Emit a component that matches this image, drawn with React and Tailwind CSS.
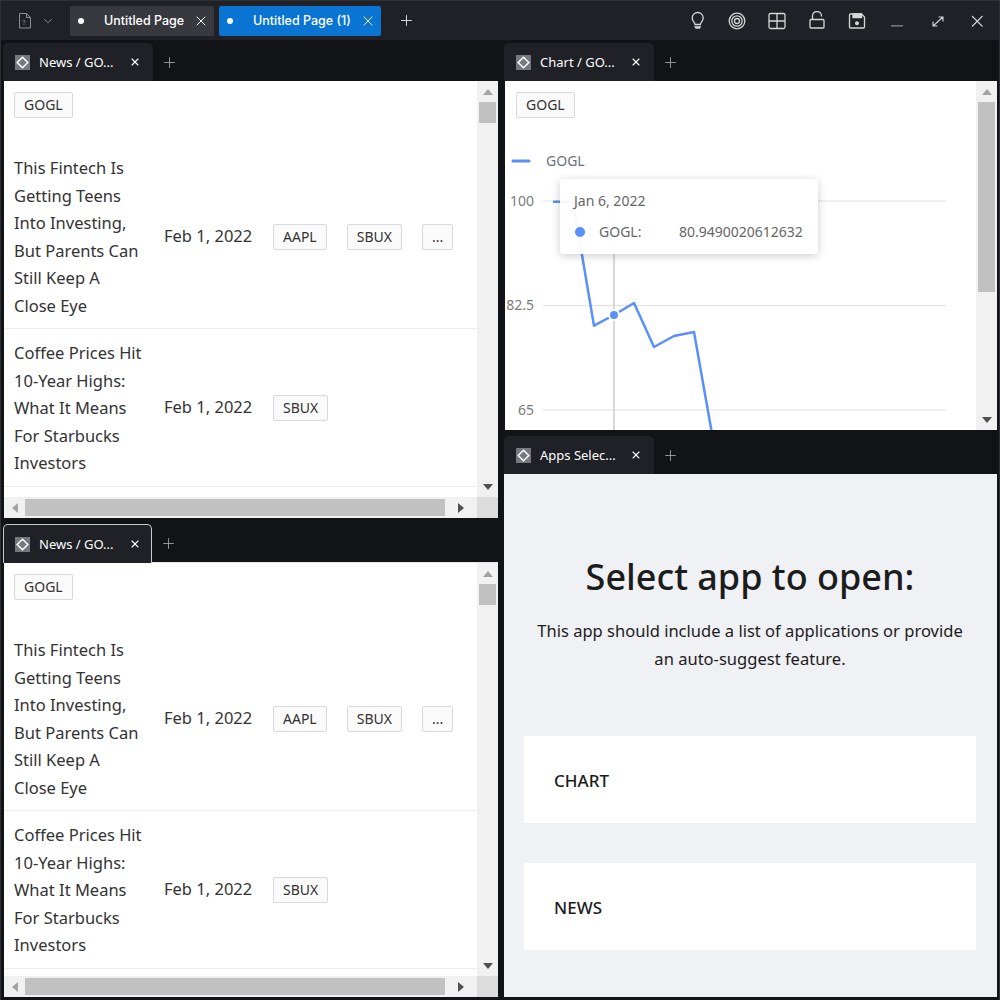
import React from 'react';
import { X, Plus, ChevronDown } from 'lucide-react';

const newsRows = [
  {
    title: 'This Fintech Is Getting Teens Into Investing, But Parents Can Still Keep A Close Eye',
    date: 'Feb 1, 2022',
    tags: ['AAPL', 'SBUX', '...'],
  },
  {
    title: 'Coffee Prices Hit 10-Year Highs: What It Means For Starbucks Investors',
    date: 'Feb 1, 2022',
    tags: ['SBUX'],
  },
];

function Tag({ children }) {
  return (
    <span className="inline-flex h-[26px] shrink-0 items-center rounded-[2px] border border-[#d9d9d9] bg-[#fafafa] px-[9px] text-[14px] leading-none text-[#333]">
      {children}
    </span>
  );
}

function Arrow({ dir, color }) {
  const points = {
    up: '0,6 10,6 5,0',
    down: '0,0 10,0 5,6',
    left: '6,0 6,10 0,5',
    right: '0,0 0,10 6,5',
  }[dir];
  const size = dir === 'up' || dir === 'down' ? 'w-[10px] h-[6px]' : 'w-[6px] h-[10px]';
  const box = dir === 'up' || dir === 'down' ? '0 0 10 6' : '0 0 6 10';
  return (
    <svg viewBox={box} className={size} fill={color}>
      <polygon points={points} />
    </svg>
  );
}

function VScroll({ thumb }) {
  return (
    <div className="flex w-[21px] shrink-0 flex-col items-center bg-[#f1f1f1]">
      <div className="flex h-[21px] items-center justify-center">
        <Arrow dir="up" color="#a3a3a3" />
      </div>
      <div className="w-[17px] bg-[#c1c1c1]" style={{ height: thumb }} />
      <div className="flex-1" />
      <div className="flex h-[21px] items-center justify-center">
        <Arrow dir="down" color="#505050" />
      </div>
    </div>
  );
}

function HScroll() {
  return (
    <div className="flex h-[21px] shrink-0">
      <div className="flex flex-1 items-center bg-[#f1f1f1]">
        <div className="flex w-[21px] justify-center">
          <Arrow dir="left" color="#a3a3a3" />
        </div>
        <div className="h-[17px] w-[420px] bg-[#c1c1c1]" />
        <div className="flex flex-1 justify-center">
          <Arrow dir="right" color="#505050" />
        </div>
      </div>
      <div className="w-[21px] bg-[#dcdcdc]" />
    </div>
  );
}

function DiamondIcon() {
  return (
    <svg viewBox="0 0 15 15" className="h-[15px] w-[15px] shrink-0">
      <rect width="15" height="15" fill="#77777f" />
      <polygon points="7.5,2.2 12.8,7.5 7.5,12.8 2.2,7.5" fill="none" stroke="#fff" strokeWidth="1.5" />
    </svg>
  );
}

function PanelTab({ label, outlined }) {
  return (
    <div className={`flex shrink-0 ${outlined ? 'h-[39px]' : 'h-[38px]'}`}>
      <div
        className={`flex items-center rounded-t-[5px] bg-[#1f2126] ${
          outlined ? 'w-[149px] border border-b-0 border-[#c9c9c9] pl-[11px]' : 'w-[150px] pl-[12px]'
        }`}
      >
        <DiamondIcon />
        <span className="ml-[9px] w-[90px] pt-[1px] text-[13px] whitespace-nowrap text-white">{label}</span>
        <X size={12} strokeWidth={2.2} className="shrink-0 text-white" />
      </div>
      <div className={`flex flex-1 items-center pl-[8px] ${outlined ? 'border-b border-[#e5e5e5]' : ''}`}>
        <Plus size={17} strokeWidth={1.1} className="text-[#b5b5b5]" />
      </div>
    </div>
  );
}

function NewsBody() {
  return (
    <div className="flex min-h-0 flex-1 flex-col bg-white">
      <div className="flex min-h-0 flex-1">
        <div className="min-w-0 flex-1 overflow-hidden">
          <div className="h-[63px] pt-[11px] pl-[10px]">
            <Tag>GOGL</Tag>
          </div>
          {newsRows.map((row) => (
            <div key={row.title} className="flex items-center border-b border-[#eeeeee] pt-[8px] pb-[9px] pl-[10px]">
              <div className="w-[150px] shrink-0 pt-[2px] pr-[20px] text-[16.5px] leading-[27.5px] text-[#333]">
                {row.title}
              </div>
              <div className="w-[109px] shrink-0 pt-[2px] text-[16.5px] text-[#333]">{row.date}</div>
              <div className="flex gap-[20px] pt-[2px]">
                {row.tags.map((tag) => (
                  <Tag key={tag}>{tag}</Tag>
                ))}
              </div>
            </div>
          ))}
        </div>
        <VScroll thumb={21} />
      </div>
      <HScroll />
    </div>
  );
}

function ChartBody() {
  const points = '553,201.7 573,201.7 594,325.7 614,315 634,303 654,347 674,336 694,332 714,445';
  return (
    <div className="flex min-h-0 flex-1 bg-white">
      <div className="relative min-w-0 flex-1 overflow-hidden">
        <div className="h-[49px] pt-[11px] pl-[11px]">
          <Tag>GOGL</Tag>
        </div>
        <svg viewBox="505 130 471 300" className="block h-[300px] w-[471px]">
          <line x1="513" x2="529" y1="161" y2="161" stroke="#5b8ff9" strokeWidth="3" strokeLinecap="round" />
          <text x="546" y="165.5" fontSize="14" fill="#6e7079">GOGL</text>
          {[201, 305.5, 410].map((y) => (
            <line key={y} x1="543" x2="946" y1={y} y2={y} stroke="#e0e0e0" strokeWidth="1" />
          ))}
          <text x="534" y="206" fontSize="14" textAnchor="end" fill="#7b7b7b">100</text>
          <text x="534" y="310" fontSize="14" textAnchor="end" fill="#7b7b7b">82.5</text>
          <text x="534" y="415" fontSize="14" textAnchor="end" fill="#7b7b7b">65</text>
          <line x1="614" x2="614" y1="201" y2="430" stroke="#cccccc" strokeWidth="1.5" />
          <polyline points={points} fill="none" stroke="#5b8ff9" strokeWidth="2.5" strokeLinejoin="round" />
          <circle cx="614" cy="315" r="5" fill="#5b8ff9" stroke="#fff" strokeWidth="2" />
        </svg>
        <div className="absolute top-[98px] left-[55px] h-[75px] w-[258px] rounded-[4px] bg-white/95 px-[14px] pt-[12px] text-[14px] text-[#666] shadow-[0_2px_10px_rgba(0,0,0,0.2)]">
          <div className="leading-[20px]">Jan 6, 2022</div>
          <div className="mt-[11px] flex items-center leading-[20px]">
            <span className="ml-[1px] h-[10px] w-[10px] rounded-full bg-[#5b8ff9]" />
            <span className="ml-[14px] w-[80px]">GOGL:</span>
            <span>80.9490020612632</span>
          </div>
        </div>
      </div>
      <VScroll thumb={190} />
    </div>
  );
}

function AppsBody() {
  return (
    <div className="-ml-[1px] flex min-h-0 flex-1 flex-col items-center bg-[#f0f1f5] pr-[21px] pl-[20px] text-[#1c1c1c]">
      <h1 className="mt-[76px] text-[36px] leading-[54px] font-medium whitespace-nowrap">Select app to open:</h1>
      <p className="mt-[13px] w-[436px] text-center text-[16.55px] leading-[28px]">
        This app should include a list of applications or provide an auto-suggest feature.
      </p>
      <div className="mt-[63px] flex h-[87px] w-full items-center bg-white pt-[2px] pl-[30px] text-[17px] font-medium">
        CHART
      </div>
      <div className="mt-[40px] flex h-[87px] w-full items-center bg-white pt-[2px] pl-[30px] text-[17px] font-medium">
        NEWS
      </div>
    </div>
  );
}

function Panel({ label, outlined, className, children }) {
  return (
    <div className={`flex flex-col ${className}`}>
      <PanelTab label={label} outlined={outlined} />
      <div className="ml-[1px] flex min-h-0 flex-1 flex-col">{children}</div>
    </div>
  );
}

function PageTab({ label, active, className }) {
  return (
    <div
      className={`flex h-[30px] items-center rounded-[2px] pl-[8px] text-[12.5px] font-medium text-white ${
        active ? 'bg-[#0a74d2]' : 'bg-[#37393f]'
      } ${className}`}
    >
      <span className="h-[6px] w-[6px] rounded-full bg-white" />
      <span className="ml-[20px] flex-1 pt-[1px] whitespace-nowrap">{label}</span>
      <X size={16} strokeWidth={1.5} className="mr-[5px] shrink-0" />
    </div>
  );
}

function ToolIcon({ children }) {
  return (
    <svg viewBox="0 0 20 20" className="h-[20px] w-[20px]" fill="none" stroke="#d6d6d6" strokeWidth="1.3">
      {children}
    </svg>
  );
}

function TitleBar() {
  return (
    <div className="flex h-[39px] shrink-0 items-center bg-[#1f2126] pr-[12px] pl-[17px]">
      <svg viewBox="0 0 14 16" className="h-[16px] w-[14px]" fill="none" stroke="#8c8c8c" strokeWidth="1">
        <path d="M1.5 .5h7l4 4v10.5h-11z M8.5 .5v4h4" />
        <text x="4.6" y="12" fontSize="6" fill="#8c8c8c" stroke="none">?</text>
      </svg>
      <ChevronDown size={14} strokeWidth={1.3} className="ml-[9px] text-[#b0b0b0]" />
      <PageTab label="Untitled Page" className="ml-[15px] w-[144px]" />
      <PageTab label="Untitled Page (1)" active className="ml-[5px] w-[162px]" />
      <Plus size={17} strokeWidth={1.3} className="ml-[17px] text-[#e5e5e5]" />
      <div className="ml-auto flex items-center gap-[20px]">
        <ToolIcon>
          <path d="M8 13.500c0-2-2.800-3-2.800-6.500a5.500 5.500 0 0 1 11 0c0 3.500-2.800 4.500-2.800 6.500z" />
          <path d="M8.200 16h5l-.8 1.200h-3.400z" />
        </ToolIcon>
        <ToolIcon>
          <circle cx="10" cy="10" r="7.800" />
          <circle cx="10" cy="10" r="5.200" />
          <circle cx="10" cy="10" r="2.500" />
        </ToolIcon>
        <ToolIcon>
          <rect x="2" y="2.500" width="16" height="15" rx="1.500" />
          <path d="M10 2.500v15M2 10h16" />
        </ToolIcon>
        <ToolIcon>
          <rect x="3" y="8.500" width="14" height="8.500" rx="1" />
          <path d="M5.500 8.500V5a4.500 4.500 0 0 1 9 0v.5" />
        </ToolIcon>
        <ToolIcon>
          <path d="M2.500 4a1 1 0 0 1 1-1h11l3 3v10a1 1 0 0 1-1 1h-13a1 1 0 0 1-1-1z" />
          <path d="M6 3h8.500v3.500H6z" fill="#d6d6d6" />
          <circle cx="10" cy="12.200" r="2" fill="#d6d6d6" stroke="none" />
        </ToolIcon>
        <ToolIcon>
          <path d="M4 14.800h12" stroke="#777" strokeWidth="1.600" />
        </ToolIcon>
        <ToolIcon>
          <path d="M11.500 6H16v4.500M16 6L6 15M6 10.500V15h4.500" strokeWidth="1.100" />
        </ToolIcon>
        <ToolIcon>
          <path d="M5 5l10.500 10.500M15.500 5L5 15.500" strokeWidth="1.100" />
        </ToolIcon>
      </div>
    </div>
  );
}

export default function App() {
  return (
    <div className="flex h-[1000px] w-[1000px] flex-col overflow-hidden border-t border-r border-l border-[#2e3035] bg-[#111316] font-['Noto_Sans',sans-serif]">
      <div className="font-['Inter',sans-serif]">
        <TitleBar />
      </div>
      <div className="flex min-h-0 flex-1 pt-[3px] pl-[2px]">
        <div className="flex w-[495px] flex-col gap-[6px]">
          <Panel label="News / GO..." className="h-[475px]">
            <NewsBody />
          </Panel>
          <Panel label="News / GO..." outlined className="h-[473px]">
            <NewsBody />
          </Panel>
        </div>
        <div className="ml-[6px] flex w-[493px] flex-col gap-[6px]">
          <Panel label="Chart / GO..." className="h-[387px]">
            <ChartBody />
          </Panel>
          <Panel label="Apps Selec..." className="h-[561px]">
            <AppsBody />
          </Panel>
        </div>
      </div>
    </div>
  );
}
